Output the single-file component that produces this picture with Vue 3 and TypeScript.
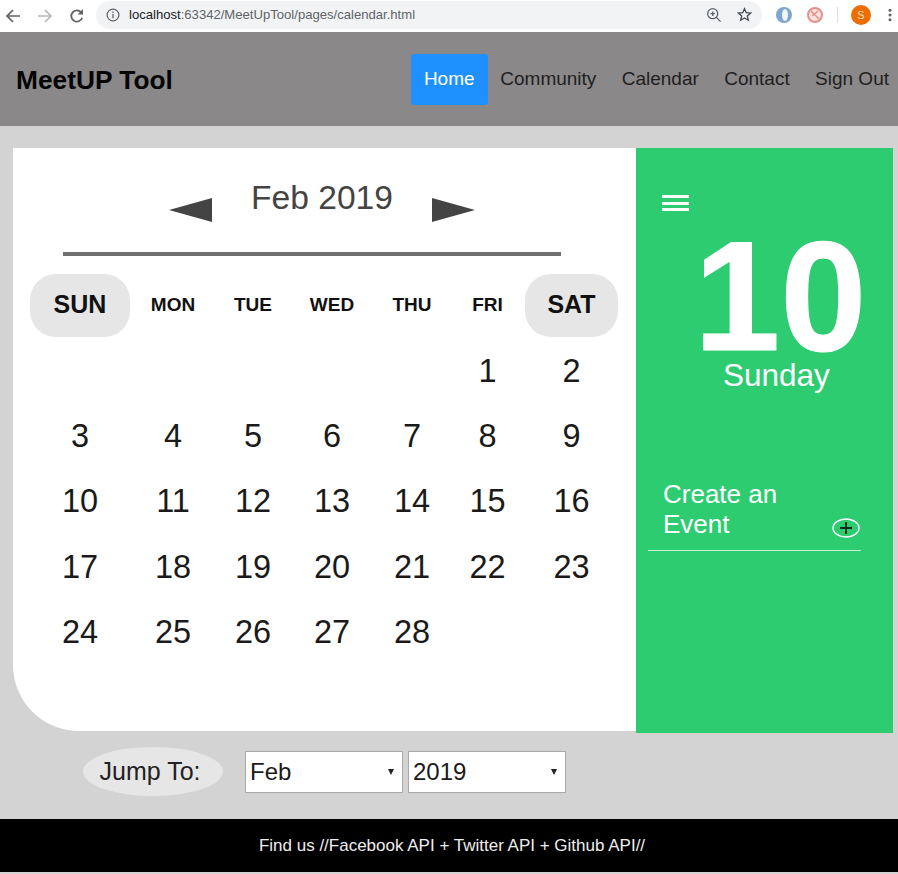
<script setup lang="ts">
const navLinks = ['Home', 'Community', 'Calendar', 'Contact', 'Sign Out']
const weekdays = ['SUN', 'MON', 'TUE', 'WED', 'THU', 'FRI', 'SAT']
const months = ['Jan', 'Feb', 'Mar', 'Apr', 'May', 'Jun', 'Jul', 'Aug', 'Sep', 'Oct', 'Nov', 'Dec']
const years = [2018, 2019, 2020]

// Feb 2019 starts on a Friday, so five blank cells first
const cells: (number | null)[] = [
  ...Array<null>(5).fill(null),
  ...Array.from({ length: 28 }, (_, i) => i + 1)
]
</script>

<template>
  <div class="page">
    <div class="browser-bar">
      <div class="bar-buttons">
        <svg class="bar-icon" width="16" height="16" viewBox="0 0 16 16"><path d="M15 8H2M8 2 2 8l6 6" fill="none" stroke="#5f6368" stroke-width="1.7" /></svg>
        <svg class="bar-icon" width="16" height="16" viewBox="0 0 16 16"><path d="M1 8h13M8 2l6 6-6 6" fill="none" stroke="#b4b7ba" stroke-width="1.7" /></svg>
        <svg class="bar-icon" width="16" height="16" viewBox="0 0 16 16"><path d="M13.2 9.8A5.6 5.6 0 1 1 12 4.2" fill="none" stroke="#5f6368" stroke-width="1.8" /><path d="M14 1v5.4H8.6z" fill="#5f6368" /></svg>
      </div>
      <div class="address">
        <svg width="14" height="14" viewBox="0 0 14 14"><circle cx="7" cy="7" r="5.9" fill="none" stroke="#5f6368" stroke-width="1.2" /><path d="M7 6v4.2M7 3.6v1.4" stroke="#5f6368" stroke-width="1.3" /></svg>
        <span class="url"><b>localhost</b>:63342/MeetUpTool/pages/calendar.html</span>
        <svg class="zoom-icon" width="16" height="16" viewBox="0 0 16 16"><circle cx="6.7" cy="6.7" r="5" fill="none" stroke="#5f6368" stroke-width="1.3" /><path d="m10.4 10.4 4.2 4.2M4.4 6.7h4.6M6.7 4.4V9" stroke="#5f6368" stroke-width="1.3" /></svg>
        <svg class="star-icon" width="15" height="15" viewBox="0 0 16 16"><path d="m8 1.8 1.9 4.3 4.6.4-3.5 3 1.1 4.6L8 11.7l-4.1 2.4L5 9.5l-3.5-3 4.6-.4z" fill="none" stroke="#45494d" stroke-width="1.4" /></svg>
      </div>
      <div class="extensions">
        <svg width="18" height="18" viewBox="0 0 18 18"><circle cx="9" cy="9" r="8" fill="#7fa6cf" /><ellipse cx="10" cy="9" rx="3" ry="6" fill="#f2f6fa" /></svg>
        <svg width="18" height="18" viewBox="0 0 18 18"><circle cx="9" cy="9" r="7" fill="#fbe3e1" stroke="#e58f88" stroke-width="2" /><path d="m5 5 8 8M12 5l-6 5" stroke="#e58f88" stroke-width="1.6" /></svg>
        <span class="divider"></span>
        <span class="avatar">S</span>
        <svg width="4" height="14" viewBox="0 0 4 14"><circle cx="2" cy="2.2" r="1.5" fill="#5f6368" /><circle cx="2" cy="7" r="1.5" fill="#5f6368" /><circle cx="2" cy="11.8" r="1.5" fill="#5f6368" /></svg>
      </div>
    </div>

    <nav class="nav">
      <div class="brand">MeetUP Tool</div>
      <div class="links">
        <a v-for="link in navLinks" :key="link" class="link" :class="{ active: link === 'Home' }">{{ link }}</a>
      </div>
    </nav>

    <main class="main">
      <div class="card">
        <section class="calendar">
          <div class="month-row">
            <svg class="arrow" width="43" height="24" viewBox="0 0 43 24"><path d="M0 12 43 0v24z" fill="#444" /></svg>
            <h2 class="month">Feb 2019</h2>
            <svg class="arrow" width="43" height="24" viewBox="0 0 43 24"><path d="M43 12 0 0v24z" fill="#444" /></svg>
          </div>
          <hr class="rule" />
          <div class="grid">
            <div
              v-for="day in weekdays"
              :key="day"
              class="weekday"
              :class="{ weekend: day === 'SUN' || day === 'SAT' }"
            >{{ day }}</div>
            <div v-for="(cell, i) in cells" :key="i" class="date">{{ cell }}</div>
          </div>
        </section>

        <aside class="side">
          <div class="burger"><span></span><span></span><span></span></div>
          <div class="big-date">10</div>
          <div class="big-day">Sunday</div>
          <div class="create">
            <div class="create-text">Create an<br />Event</div>
            <svg class="plus" width="28" height="20" viewBox="0 0 28 20">
              <ellipse cx="14" cy="10" rx="13" ry="9" fill="none" stroke="#fff" stroke-width="1.4" />
              <path d="M14 4v12M8 10h12" stroke="#0b2c18" stroke-width="2" />
            </svg>
          </div>
        </aside>
      </div>

      <div class="jump">
        <span class="jump-label">Jump To:</span>
        <span class="pick-wrap pick-month">
          <select class="pick">
            <option v-for="m in months" :key="m" :selected="m === 'Feb'">{{ m }}</option>
          </select>
        </span>
        <span class="pick-wrap">
          <select class="pick">
            <option v-for="y in years" :key="y" :selected="y === 2019">{{ y }}</option>
          </select>
        </span>
      </div>
    </main>

    <footer class="footer">Find us //Facebook API + Twitter API + Github API//</footer>
  </div>
</template>

<style>
html,
body {
  margin: 0;
  background: #e4e4e4;
}
</style>

<style scoped>
.page {
  width: 898px;
  height: 874px;
  overflow: hidden;
  display: flex;
  flex-direction: column;
  background: #d3d3d3;
  font-family: "Liberation Sans", Arial, sans-serif;
}

.browser-bar {
  height: 32px;
  background: #fff;
  display: flex;
  align-items: center;
  flex-shrink: 0;
}

.bar-buttons {
  display: flex;
  align-items: center;
  gap: 16px;
  padding-left: 5px;
  width: 96px;
  box-sizing: border-box;
}

.address {
  width: 666px;
  height: 28px;
  margin-top: -3px;
  border-radius: 14px;
  background: #f1f3f4;
  display: flex;
  align-items: center;
  padding-left: 10px;
  box-sizing: border-box;
}

.url {
  margin-left: 9px;
  font-size: 13.1px;
  color: #5f6368;
}

.url b {
  font-weight: 400;
  color: #202124;
}

.zoom-icon {
  margin-left: auto;
}

.star-icon {
  margin: 0 10px 0 15px;
}

.extensions {
  flex: 1;
  display: flex;
  align-items: center;
  padding-left: 13px;
  gap: 13px;
  margin-top: -2px;
}

.divider {
  width: 1px;
  height: 16px;
  background: #dadce0;
}

.avatar {
  width: 20px;
  height: 20px;
  margin-right: 4px;
  border-radius: 50%;
  background: #ef6c00;
  color: #ffe0c2;
  font-size: 11px;
  line-height: 20px;
  text-align: center;
}

.nav {
  height: 94px;
  background: #8a8888;
  display: flex;
  align-items: center;
  justify-content: space-between;
  padding: 0 9px 0 16px;
  flex-shrink: 0;
}

.brand {
  font-size: 26.3px;
  font-weight: 700;
  color: #050505;
  padding-top: 2px;
}

.links {
  display: flex;
  align-items: center;
}

.link {
  padding: 0 12.7px;
  height: 51px;
  line-height: 50px;
  margin-top: 1px;
  font-size: 19px;
  color: #1f1f1f;
  border-radius: 3px;
}

.link:last-child {
  padding-right: 0;
}

.link.active {
  background: #1e90ff;
  color: #fff;
  padding: 0 13px;
}

.main {
  flex: 1;
  padding: 22px 5px 0 13px;
}

.card {
  display: flex;
  align-items: flex-start;
}

.calendar {
  width: 623px;
  height: 583px;
  background: #fff;
  border-bottom-left-radius: 66px;
  box-sizing: border-box;
}

.month-row {
  display: flex;
  justify-content: center;
  padding: 30px 5px 0 0;
  height: 78px;
  box-sizing: border-box;
}

.month {
  margin: 0 39px;
  font-size: 33.6px;
  font-weight: 400;
  line-height: 40px;
  color: #444;
}

.arrow {
  margin-top: 20px;
}

.rule {
  width: 498px;
  height: 4px;
  margin: 26px 0 0 50px;
  border: 0;
  background: #707070;
}

.grid {
  display: grid;
  grid-template-columns: 100px 86px 74px 84px 76px 75px 93px;
  grid-auto-rows: 65.4px;
  margin: 18px 0 0 17px;
}

.weekday {
  height: 63px;
  box-sizing: border-box;
  padding-bottom: 2px;
  display: flex;
  align-items: center;
  justify-content: center;
  font-size: 19px;
  font-weight: 700;
  color: #111;
}

.weekend {
  background: #e6e6e6;
  border-radius: 26px;
  font-size: 25px;
}

.date {
  padding-bottom: 2px;
  display: flex;
  align-items: center;
  justify-content: center;
  font-size: 32.5px;
  color: #1a1a1a;
}

.side {
  width: 257px;
  height: 585px;
  background: #2ecc71;
  color: #fff;
  box-sizing: border-box;
  padding-top: 47px;
}

.burger {
  width: 27px;
  margin-left: 26px;
  display: flex;
  flex-direction: column;
  gap: 3.5px;
}

.burger span {
  height: 3px;
  background: #fff;
}

.big-date {
  margin: 28px 0 0 58px;
  font-size: 155px;
  line-height: 116px;
  font-weight: 700;
  -webkit-text-stroke: 1px #fff;
}

.big-day {
  margin: 2px 0 0 87px;
  font-size: 31.5px;
  line-height: 36px;
}

.create {
  width: 213px;
  height: 80px;
  margin: 78px 0 0 12px;
  padding: 0 1px 12px 15px;
  box-sizing: border-box;
  border-bottom: 1px solid #c5eed5;
  display: flex;
  justify-content: space-between;
  align-items: flex-end;
}

.create-text {
  font-size: 26px;
  line-height: 30px;
  margin-bottom: -1px;
}

.jump {
  display: flex;
  align-items: center;
  margin: 14px 0 0 70px;
}

.jump-label {
  width: 140px;
  height: 49px;
  box-sizing: border-box;
  padding-right: 6px;
  border-radius: 50%;
  background: #e6e6e6;
  font-size: 25px;
  line-height: 49px;
  text-align: center;
  color: #222;
  margin-right: 22px;
}

.pick-wrap {
  position: relative;
  display: block;
  width: 158px;
  height: 42px;
}

.pick-wrap::after {
  content: "";
  position: absolute;
  right: 9px;
  top: 18px;
  border-left: 3px solid transparent;
  border-right: 3px solid transparent;
  border-top: 6px solid #222;
  pointer-events: none;
}

.pick-month {
  margin-right: 5px;
}

.pick {
  appearance: none;
  display: block;
  width: 100%;
  height: 100%;
  box-sizing: border-box;
  padding: 0 0 0 4px;
  background: #fff;
  border: 1px solid #a9a9a9;
  border-radius: 0;
  font-family: "Liberation Sans", Arial, sans-serif;
  font-size: 24px;
  color: #1a1a1a;
}

.footer {
  height: 53px;
  margin-bottom: 2px;
  background: #000;
  color: #eee;
  font-size: 17px;
  line-height: 53px;
  text-align: center;
  padding-left: 6px;
  box-sizing: border-box;
  flex-shrink: 0;
}
</style>
